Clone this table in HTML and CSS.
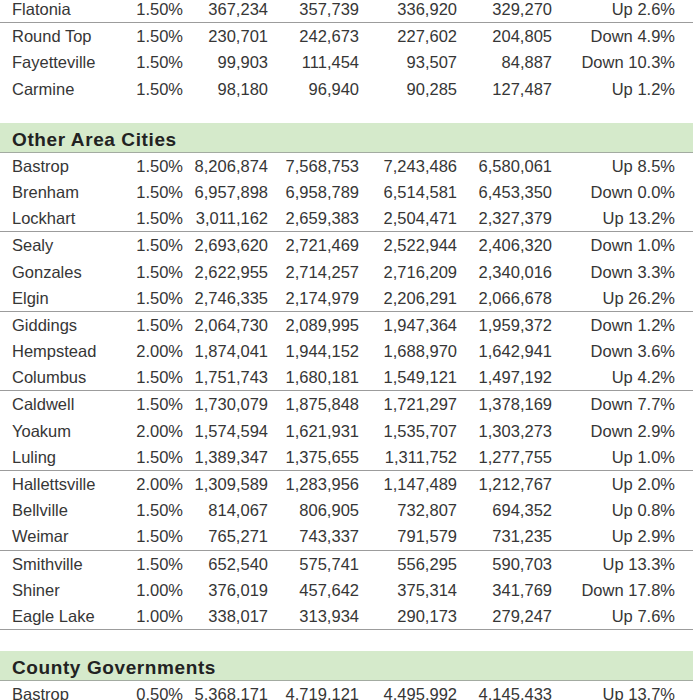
FILE: index.html
```html
<!DOCTYPE html>
<html>
<head>
    <link rel="stylesheet" href="styles.css">
</head>
<body>
    <div class="sheet">
        <!-- tail of the previous section -->
        <div class="section first">
            <div class="group">
                <div class="row"><span class="name">Flatonia</span><span>1.50%</span><span>367,234</span><span>357,739</span><span>336,920</span><span>329,270</span><span>Up 2.6%</span></div>
            </div>
            <div class="group last">
                <div class="row"><span class="name">Round Top</span><span>1.50%</span><span>230,701</span><span>242,673</span><span>227,602</span><span>204,805</span><span>Down 4.9%</span></div>
                <div class="row"><span class="name">Fayetteville</span><span>1.50%</span><span>99,903</span><span>111,454</span><span>93,507</span><span>84,887</span><span>Down 10.3%</span></div>
                <div class="row"><span class="name">Carmine</span><span>1.50%</span><span>98,180</span><span>96,940</span><span>90,285</span><span>127,487</span><span>Up 1.2%</span></div>
            </div>
        </div>

        <div class="section">
            <div class="section-title">Other Area Cities</div>
            <div class="group">
                <div class="row"><span class="name">Bastrop</span><span>1.50%</span><span>8,206,874</span><span>7,568,753</span><span>7,243,486</span><span>6,580,061</span><span>Up 8.5%</span></div>
                <div class="row"><span class="name">Brenham</span><span>1.50%</span><span>6,957,898</span><span>6,958,789</span><span>6,514,581</span><span>6,453,350</span><span>Down 0.0%</span></div>
                <div class="row"><span class="name">Lockhart</span><span>1.50%</span><span>3,011,162</span><span>2,659,383</span><span>2,504,471</span><span>2,327,379</span><span>Up 13.2%</span></div>
            </div>
            <div class="group">
                <div class="row"><span class="name">Sealy</span><span>1.50%</span><span>2,693,620</span><span>2,721,469</span><span>2,522,944</span><span>2,406,320</span><span>Down 1.0%</span></div>
                <div class="row"><span class="name">Gonzales</span><span>1.50%</span><span>2,622,955</span><span>2,714,257</span><span>2,716,209</span><span>2,340,016</span><span>Down 3.3%</span></div>
                <div class="row"><span class="name">Elgin</span><span>1.50%</span><span>2,746,335</span><span>2,174,979</span><span>2,206,291</span><span>2,066,678</span><span>Up 26.2%</span></div>
            </div>
            <div class="group">
                <div class="row"><span class="name">Giddings</span><span>1.50%</span><span>2,064,730</span><span>2,089,995</span><span>1,947,364</span><span>1,959,372</span><span>Down 1.2%</span></div>
                <div class="row"><span class="name">Hempstead</span><span>2.00%</span><span>1,874,041</span><span>1,944,152</span><span>1,688,970</span><span>1,642,941</span><span>Down 3.6%</span></div>
                <div class="row"><span class="name">Columbus</span><span>1.50%</span><span>1,751,743</span><span>1,680,181</span><span>1,549,121</span><span>1,497,192</span><span>Up 4.2%</span></div>
            </div>
            <div class="group">
                <div class="row"><span class="name">Caldwell</span><span>1.50%</span><span>1,730,079</span><span>1,875,848</span><span>1,721,297</span><span>1,378,169</span><span>Down 7.7%</span></div>
                <div class="row"><span class="name">Yoakum</span><span>2.00%</span><span>1,574,594</span><span>1,621,931</span><span>1,535,707</span><span>1,303,273</span><span>Down 2.9%</span></div>
                <div class="row"><span class="name">Luling</span><span>1.50%</span><span>1,389,347</span><span>1,375,655</span><span>1,311,752</span><span>1,277,755</span><span>Up 1.0%</span></div>
            </div>
            <div class="group">
                <div class="row"><span class="name">Hallettsville</span><span>2.00%</span><span>1,309,589</span><span>1,283,956</span><span>1,147,489</span><span>1,212,767</span><span>Up 2.0%</span></div>
                <div class="row"><span class="name">Bellville</span><span>1.50%</span><span>814,067</span><span>806,905</span><span>732,807</span><span>694,352</span><span>Up 0.8%</span></div>
                <div class="row"><span class="name">Weimar</span><span>1.50%</span><span>765,271</span><span>743,337</span><span>791,579</span><span>731,235</span><span>Up 2.9%</span></div>
            </div>
            <div class="group">
                <div class="row"><span class="name">Smithville</span><span>1.50%</span><span>652,540</span><span>575,741</span><span>556,295</span><span>590,703</span><span>Up 13.3%</span></div>
                <div class="row"><span class="name">Shiner</span><span>1.00%</span><span>376,019</span><span>457,642</span><span>375,314</span><span>341,769</span><span>Down 17.8%</span></div>
                <div class="row"><span class="name">Eagle Lake</span><span>1.00%</span><span>338,017</span><span>313,934</span><span>290,173</span><span>279,247</span><span>Up 7.6%</span></div>
            </div>
        </div>

        <div class="section">
            <div class="section-title">County Governments</div>
            <div class="group">
                <div class="row"><span class="name">Bastrop</span><span>0.50%</span><span>5,368,171</span><span>4,719,121</span><span>4,495,992</span><span>4,145,433</span><span>Up 13.7%</span></div>
            </div>
        </div>
    </div>
</body>
</html>
```

FILE: styles.css
```css
body {
    margin: 0;
    background: #fff;
    font-family: "Liberation Sans", Arial, sans-serif;
    color: #363636;
    overflow: hidden;
}
.sheet {
    width: 693px;
}
.section {
    margin-bottom: 21px;
}
.section.first {
    margin-top: -4px;
}
.section-title {
    height: 25px;
    padding: 4px 0 0 12px;
    line-height: 25px;
    background-color: #d5eacb;
    border-bottom: 1px solid #a3aba1;
    font-size: 19px;
    font-weight: bold;
    letter-spacing: 0.6px;
    color: #222;
}
.group {
    border-bottom: 1px solid #9c9c9c;
}
.group.last {
    border-bottom: none;
}
.row {
    display: grid;
    grid-template-columns: 118px 53px 85px 91px 98px 95px 123px;
    padding: 1px 0 0 12px;
    height: 25.2px;
    line-height: 24.2px;
    font-size: 16.5px;
    white-space: nowrap;
}
.row span {
    text-align: right;
}
.row .name {
    text-align: left;
}
```
